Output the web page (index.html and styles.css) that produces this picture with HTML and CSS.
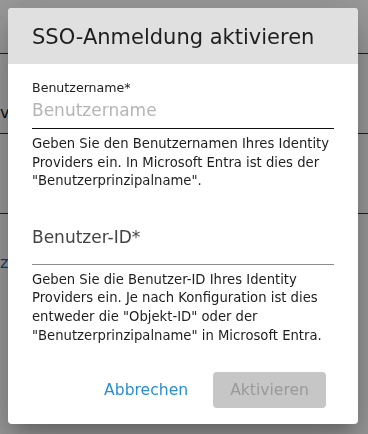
FILE: index.html
```html
<!DOCTYPE html>
<html lang="de">
<head>
  <meta charset="UTF-8">
  <meta name="viewport" content="width=device-width, initial-scale=1.0">
  <title>SSO-Anmeldung aktivieren</title>
  <link rel="stylesheet" href="styles.css">
</head>
<body>

  <!-- Seite im Hintergrund -->
  <div class="page">
    <div class="page-row"><span class="page-text">v.</span></div>
    <div class="page-row"></div>
    <div class="page-row last"><span class="page-link">ze</span></div>
  </div>

  <div class="backdrop">
    <div class="dialog">
      <h2 class="dialog-title">SSO-Anmeldung aktivieren</h2>

      <div class="dialog-content">
        <div class="field">
          <label class="field-label shrink" for="username">Benutzername*</label>
          <input class="field-input focused" id="username" type="text" placeholder="Benutzername">
        </div>
        <p class="helper">Geben Sie den Benutzernamen Ihres Identity Providers ein. In Microsoft Entra ist dies der "Benutzerprinzipalname".</p>

        <div class="field">
          <label class="field-label" for="userid">Benutzer-ID*</label>
          <input class="field-input" id="userid" type="text">
        </div>
        <p class="helper">Geben Sie die Benutzer-ID Ihres Identity Providers ein. Je nach Konfiguration ist dies entweder die "Objekt-ID" oder der "Benutzerprinzipalname" in Microsoft Entra.</p>
      </div>

      <div class="dialog-actions">
        <button class="btn btn-text">Abbrechen</button>
        <button class="btn btn-primary" disabled>Aktivieren</button>
      </div>
    </div>
  </div>

</body>
</html>
```

FILE: styles.css
```css
html, body {
  margin: 0;
  height: 100%;
}
body {
  font-family: "DejaVu Sans", Verdana, sans-serif;
  background: #fff;
  color: #222;
  overflow: hidden;
}
.page {
  padding-top: 53px;
}
.page-row {
  height: 79px;
  border-top: 1px solid #333;
  font-size: 16px;
  line-height: 18px;
}
.page-row.last {
  border-top: 1px solid #333;
}
.page-text {
  display: block;
  padding-top: 50px;
  color: #222;
}
.page-link {
  display: block;
  padding-top: 40px;
  color: #1b6fae;
}
.backdrop {
  position: fixed;
  inset: 0;
  background: rgba(0, 0, 0, 0.4);
  padding: 8px;
  box-sizing: border-box;
}
.dialog {
  width: 350px;
  background: #fff;
  border-radius: 4px;
  overflow: hidden;
  box-shadow: 0 11px 15px -7px rgba(0, 0, 0, 0.2), 0 24px 38px 3px rgba(0, 0, 0, 0.14), 0 9px 46px 8px rgba(0, 0, 0, 0.12);
}
.dialog-title {
  margin: 0;
  height: 56px;
  background: #e0e0e0;
  padding: 0 24px;
  font-size: 21px;
  font-weight: normal;
  line-height: 58px;
  color: #1e1e1e;
}
.dialog-content {
  padding: 16px 24px 0;
}
.field {
  position: relative;
  padding-top: 16px;
}
.field-label {
  position: absolute;
  left: 0;
  top: 11px;
  font-size: 17px;
  line-height: 20px;
  color: #444;
}
.field-label.shrink {
  top: 0;
  font-size: 12.6px;
  line-height: 16px;
  color: #222;
}
.field-input {
  display: block;
  width: 100%;
  box-sizing: border-box;
  height: 33px;
  padding: 4px 0 8px;
  border: none;
  border-bottom: 1px solid #8c8c8c;
  font-family: inherit;
  font-size: 17px;
  line-height: 20px;
  color: #222;
  background: transparent;
  outline: none;
}
.field-input.focused {
  border-bottom-color: #111;
}
.field-input::placeholder {
  color: #b5b5b5;
}
.helper {
  margin: 6px 0 25px;
  font-size: 13.2px;
  line-height: 18.6px;
  color: #1e1e1e;
}
.helper:last-child {
  margin-bottom: 0;
}
.dialog-actions {
  display: flex;
  justify-content: flex-end;
  gap: 8px;
  padding: 27px 32px 16px 24px;
}
.btn {
  height: 36px;
  padding: 0 17px;
  border: none;
  border-radius: 4px;
  font-family: inherit;
  font-size: 15.6px;
  background: none;
  cursor: pointer;
}
.btn-text {
  color: #2a8ed0;
}
.btn-primary {
  background: #c6c6c6;
  color: #999;
}
```
